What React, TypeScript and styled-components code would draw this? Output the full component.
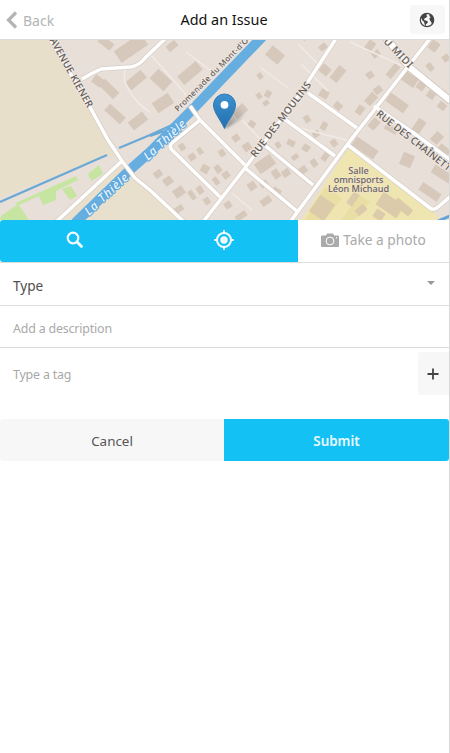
import React from "react";
import styled, { createGlobalStyle } from "styled-components";

const Global = createGlobalStyle`
  * { box-sizing: border-box; }
  body { margin: 0; background: #fff; font-family: "Noto Sans", "Open Sans", sans-serif; }
`;

const Screen = styled.main`
  width: 450px;
  height: 753px;
  border-right: 1px solid #d9d9d9;
  background: #fff;
  overflow: hidden;
`;

const Header = styled.header`
  height: 40px;
  display: grid;
  grid-template-columns: 1fr auto 1fr;
  align-items: center;
  border-bottom: 1px solid #dcdcd8;
`;

const BackButton = styled.button`
  display: flex;
  align-items: center;
  gap: 5px;
  padding: 2px 0 0 6px;
  border: 0;
  background: none;
  color: #b4b4b4;
  font: 14px/20px "Noto Sans", sans-serif;
`;

const Title = styled.h1`
  margin: 0;
  padding-right: 1px;
  color: #111;
  font: 400 14.4px/20px "Noto Sans", sans-serif;
`;

const GlobeButton = styled.button`
  justify-self: end;
  display: flex;
  align-items: center;
  justify-content: center;
  width: 35px;
  height: 29px;
  margin-right: 4px;
  padding: 0 1px 0 0;
  border: 0;
  border-radius: 3px;
  background: #f7f7f7;
  color: #444;
`;

const MapView = styled.svg`
  display: block;
  width: 449px;
  height: 180px;
`;

const Tools = styled.div`
  display: flex;
  height: 43px;
  border-bottom: 1px solid #dcdcdc;
`;

const MapActions = styled.div`
  display: flex;
  width: 298px;
  height: 42px;
  border-radius: 3px 0 0 3px;
  overflow: hidden;
  background: #13c1f5;
`;

const MapAction = styled.button`
  flex: 1;
  display: flex;
  align-items: center;
  justify-content: center;
  padding: 0 0 3px;
  border: 0;
  background: none;
  color: #f4fcff;
`;

const PhotoButton = styled.button`
  flex: 1;
  display: flex;
  align-items: center;
  justify-content: center;
  gap: 4px;
  padding: 0 0 2px;
  border: 0;
  background: none;
  color: #aaa;
  font: 13.7px/20px "Noto Sans", sans-serif;
`;

const Field = styled.div<{ $height: number; $dark?: boolean; $last?: boolean }>`
  display: flex;
  align-items: center;
  justify-content: space-between;
  height: ${(p) => p.$height}px;
  padding-left: 13px;
  border-bottom: ${(p) => (p.$last ? "0" : "1px solid #dcdcdc")};
  color: ${(p) => (p.$dark ? "#505050" : "#a9a9a9")};
  font-size: ${(p) => (p.$dark ? 13.6 : 12.4)}px;
  letter-spacing: ${(p) => (p.$dark ? 0 : -0.17)}px;
`;

const FieldText = styled.span<{ $raised?: boolean }>`
  padding-top: ${(p) => (p.$raised ? 2 : 4)}px;
  line-height: 20px;
`;

const Caret = styled.span`
  width: 0;
  height: 0;
  margin: 0 14px 2px 0;
  border: 4px solid transparent;
  border-top-color: #999;
  border-bottom: 0;
`;

const AddButton = styled.button`
  display: flex;
  align-items: center;
  justify-content: center;
  width: 31px;
  height: 43px;
  padding: 0 1px 0 0;
  border: 0;
  border-radius: 3px 0 0 3px;
  background: #f7f7f7;
`;

const Footer = styled.div`
  display: flex;
  margin-top: 20px;
`;

const FooterButton = styled.button<{ $primary?: boolean }>`
  flex: ${(p) => (p.$primary ? "1" : "0 0 224px")};
  height: 42px;
  padding: 2px 0 0;
  border: 0;
  border-radius: ${(p) => (p.$primary ? "0 3px 3px 0" : "3px 0 0 3px")};
  background: ${(p) => (p.$primary ? "#13c1f5" : "#f7f7f7")};
  color: ${(p) => (p.$primary ? "#e9faff" : "#555")};
  font: ${(p) => (p.$primary ? 600 : 400)} 13.4px/20px "Noto Sans", sans-serif;
`;

const MapLabel = styled.text`
  font-family: "Noto Sans", sans-serif;
  font-weight: 500;
  fill: #625c5a;
  stroke: #f1e9e2;
  stroke-width: 1.6px;
  stroke-linejoin: round;
  paint-order: stroke;
`;

const PlaceLabel = styled(MapLabel)`
  fill: #6b6265;
  stroke: #eee4c8;
`;

const WaterLabel = styled(MapLabel)`
  font-style: italic;
  fill: #e6f4ff;
  stroke: #5ca5db;
  stroke-width: 2px;
`;

// x, y, width, height, rotation of each building footprint
type Building = [number, number, number, number, number];

const BUILDINGS: Building[] = [
  [106, 43, 15, 8, 38], [131, 48, 32, 14, -34], [125, 55, 12, 7, -34], [98, 81, 11, 9, 36],
  [109, 89, 20, 9, 44], [136, 80, 20, 10, -40], [115, 114, 21, 9, 42], [138, 121, 18, 10, -38],
  [161, 80, 19, 13, 43], [163, 103, 19, 12, -33], [190, 73, 24, 11, -40], [172, 46, 11, 7, -40],
  [275, 55, 16, 12, 40], [260, 76, 5, 6, -38], [240, 111, 14, 9, -40], [252, 124, 7, 6, 35],
  [236, 138, 7, 7, -35], [247, 147, 8, 8, -35], [266, 103, 6, 5, -35], [259, 96, 5, 6, -35],
  [268, 94, 6, 7, 30], [182, 147, 6, 7, -35], [192, 157, 7, 7, -35], [200, 151, 5, 7, -35],
  [205, 169, 8, 8, 30], [218, 169, 6, 8, -35], [226, 175, 7, 7, -35], [216, 181, 5, 8, -35],
  [222, 153, 6, 7, -35], [158, 174, 8, 7, -35], [168, 181, 9, 8, -35], [179, 192, 11, 9, -35],
  [192, 195, 5, 10, -35], [207, 201, 6, 7, -35], [179, 209, 9, 6, -35], [200, 190, 6, 8, -35],
  [252, 186, 8, 8, -35], [265, 164, 19, 12, -35], [276, 174, 7, 9, -35], [286, 173, 8, 7, -35],
  [264, 184, 8, 6, -35], [276, 192, 9, 8, 35], [266, 201, 11, 7, -35], [228, 205, 7, 7, -35],
  [241, 216, 12, 6, -35], [291, 143, 8, 6, 25], [278, 145, 5, 6, -35], [295, 157, 7, 5, -35],
  [307, 119, 6, 7, -35], [316, 134, 7, 6, -35], [324, 126, 6, 8, 30], [334, 143, 6, 7, -35],
  [306, 148, 7, 7, 35], [314, 163, 6, 8, -35], [325, 157, 6, 8, 35], [303, 170, 8, 7, -35],
  [306, 36, 9, 6, -40], [323, 47, 8, 6, -40], [325, 70, 10, 9, 40], [338, 74, 9, 16, 38],
  [324, 94, 9, 8, 30], [338, 106, 8, 7, 40], [360, 110, 7, 9, 35], [371, 99, 12, 8, -48],
  [378, 90, 8, 7, -35], [370, 75, 7, 7, -35], [370, 46, 8, 11, 35], [376, 54, 8, 6, -35],
  [393, 71, 7, 15, 40], [409, 79, 17, 10, 35], [421, 86, 8, 8, 35], [431, 95, 8, 7, 35],
  [442, 106, 8, 7, 35], [434, 46, 9, 10, 35], [446, 58, 7, 7, -35], [430, 67, 6, 8, -40],
  [397, 103, 22, 10, 35], [374, 124, 11, 8, -48], [391, 129, 13, 6, 28], [419, 126, 9, 14, 34],
  [437, 138, 11, 9, -48], [365, 148, 26, 10, 34], [407, 160, 12, 13, 23], [443, 151, 10, 12, -50],
  [442, 174, 21, 9, 32], [430, 192, 22, 9, 34]
];

const FACILITIES: Building[] = [
  [322, 208, 18, 20, 35], [353, 199, 7, 14, 35], [390, 205, 25, 15, 34], [403, 207, 8, 20, -50],
  [379, 215, 10, 9, 34], [361, 210, 11, 7, -40]
];

const MINOR_ROADS = [
  "M330 24L344 37M126 67Q121 78 130 92T150 112M150 54L183 91L192 103",
  "M186 52L210 70M260 67L288 88M232 193L252 210M242 120L263 142",
  "M298 44L318 64M301 64L328 91M350 42L407 68M292 126L350 141"
].join("");

const ROADS = [
  "M48 35L91 109L108 140L122 161L135 178L151 191L184 222",
  "M122 161L56 222",
  "M82 79Q92 73 101 69L130 67Q139 66 146 57L168 36",
  "M190 106L200 120L245 165M200 120L172 143Q168 147 173 151L220 197",
  "M203 222L245 168L302 91L337 37",
  "M245 168L298 212M262 143L313 185M283 118L335 156M308 93L357 128",
  "M290 222L350 141L407 68L432 36",
  "M374 106L412 132L452 161M348 145L430 208Q434 211 438 207L452 195"
].join("");

function Footprints({ items, fill }: { items: Building[]; fill: string }) {
  return (
    <g fill={fill}>
      {items.map(([x, y, w, h, r], i) => (
        <rect key={i} x={x - w / 2} y={y - h / 2} width={w} height={h} transform={`rotate(${r} ${x} ${y})`} />
      ))}
    </g>
  );
}

function StreetMap() {
  return (
    <MapView viewBox="0 40 449 180" role="img" aria-label="Map">
      <defs>
        <linearGradient id="pin" x1="0" y1="0" x2="0" y2="1">
          <stop offset="0" stopColor="#3e91d0" />
          <stop offset="1" stopColor="#2370ad" />
        </linearGradient>
        <linearGradient id="shade" x1="0" y1="1" x2="1" y2="0">
          <stop offset="0" stopColor="#555" stopOpacity=".65" />
          <stop offset="1" stopColor="#777" stopOpacity="0" />
        </linearGradient>
        <filter id="soft"><feGaussianBlur stdDeviation="1" /></filter>
      </defs>
      <rect y="40" width="449" height="180" fill="#e8dfd8" />
      <path d="M0 40H51L91 109L122 161L107 155L0 198Z" fill="#e7dfc9" />
      <path d="M122 161L60 220H184L150 190Z" fill="#e8dfcd" />
      <path d="M349 147L433 210L442 222H300Z" fill="#eee5b0" />
      <path d="M305 220L325 187L342 198L323 222M340 222L359 195L370 202L352 222" fill="#e9deA3" />
      <path d="M1 216L18 204L29 220H0ZM88 174L99 165L103 174L91 181ZM16 203L76 176L78 180L56 191V200L43 205L39 196L17 206ZM62 189L71 186L77 196L70 200Z" fill="#c6e5a0" />
      <path d="M0 202L107 155M119 148L150 135L172 125M150 136L171 129" stroke="#6aa8d6" strokeWidth="2.1" fill="none" />
      <path d="M265 34L192 110L150 152L132 168L75 223" stroke="#67aee0" strokeWidth="10" fill="none" />
      <path d="M436 222L452 215" stroke="#62a5d8" strokeWidth="3" />
      <Footprints items={BUILDINGS} fill="#d6c8bb" />
      <Footprints items={FACILITIES} fill="#dccbaa" />
      <path d={MINOR_ROADS} fill="none" stroke="#f1eae5" strokeWidth="1.5" />
      <g fill="none" strokeLinejoin="round">
        <path d={ROADS} stroke="#d8cec7" strokeWidth="5" />
        <path d="M384 35L409 67L452 102" stroke="#cbc2bc" strokeWidth="8" />
        <path d={ROADS} stroke="#fff" strokeWidth="3.5" />
        <path d="M384 35L409 67L452 102" stroke="#fff" strokeWidth="6.3" />
      </g>
      <MapLabel fontSize="10" textLength="78" transform="translate(49.500 40) rotate(61)">AVENUE KIENER</MapLabel>
      <MapLabel fontSize="8" textLength="104" fontWeight="400" transform="translate(178 112) rotate(-45)">Promenade du Mont-d'Or</MapLabel>
      <MapLabel fontSize="10" textLength="92" transform="translate(255.500 158) rotate(-52.500)">RUE DES MOULINS</MapLabel>
      <MapLabel fontSize="10" textLength="37" transform="translate(383 42) rotate(46)">U MIDI</MapLabel>
      <MapLabel fontSize="10" textLength="103" transform="translate(375.500 115) rotate(38)">RUE DES CHAÎNETTES</MapLabel>
      <WaterLabel fontSize="12" textLength="55" transform="translate(89 216) rotate(-43)">La Thièle</WaterLabel>
      <WaterLabel fontSize="12" textLength="53" transform="translate(148 161) rotate(-43)">La Thièle</WaterLabel>
      <g textAnchor="middle" fontSize="9.100">
        <PlaceLabel x="358.500" y="174">Salle</PlaceLabel>
        <PlaceLabel x="358.500" y="183">omnisports</PlaceLabel>
        <PlaceLabel x="358.500" y="191.500">Léon Michaud</PlaceLabel>
      </g>
      <path d="M225 129L232 113Q239 104 243 110Q246 115 240 120Z" fill="url(#shade)" filter="url(#soft)" />
      <path d="M224.500 128.500C220 119 213.500 112 213.500 105a11 11 0 0 1 22 0C235.500 112 229 119 224.500 128.500Z" fill="url(#pin)" stroke="#2e7cb7" />
      <circle cx="224.500" cy="104.800" r="3.900" fill="#fff" />
    </MapView>
  );
}

function GlobeIcon() {
  return (
    <svg width="16" height="16" viewBox="0 0 16 16">
      <circle cx="8" cy="8" r="6.700" fill="none" stroke="currentColor" strokeWidth="1.200" />
      <path fill="currentColor" d="M1.500 6L3.500 3L6 1.400L8 2L7.300 3.500L8.500 4L7 5.800L5.700 6.200L5 8L6.500 8.500L8.800 9.300L8.500 11L7 12.200L6.500 14.500L5.600 12L5 9.800L3.300 8.500L2.600 6.500ZM10.500 2L13 3.500L14.600 6.500L14.500 10L13 12.500L12.200 10L11 8.500L10.300 6.300L11.700 5.200L10.300 4Z" />
    </svg>
  );
}

function SearchIcon() {
  return (
    <svg width="18" height="18" viewBox="0 0 18 18" fill="none" stroke="currentColor">
      <circle cx="7" cy="7" r="5.300" strokeWidth="2.200" />
      <path d="M10.800 10.800L16.300 16.300" strokeWidth="2.800" />
    </svg>
  );
}

function LocateIcon() {
  return (
    <svg width="20" height="20" viewBox="0 0 20 20" fill="none" stroke="currentColor" strokeWidth="2">
      <circle cx="10" cy="10" r="7" />
      <path d="M10 .3V3M10 17V19.700M.3 10H3M17 10H19.700" />
      <circle cx="10" cy="10" r="3.700" fill="currentColor" stroke="none" />
    </svg>
  );
}

function CameraIcon() {
  return (
    <svg width="18" height="15" viewBox="0 0 18 15">
      <path fill="currentColor" d="M1 2.500H5L6 .5H12L13 2.500H17Q18 2.500 18 3.500V13Q18 14 17 14H1Q0 14 0 13V3.500Q0 2.500 1 2.500Z" />
      <circle cx="9" cy="8" r="3.900" fill="none" stroke="#fff" />
      <circle cx="15.500" cy="4.800" r=".7" fill="#fff" />
    </svg>
  );
}

export default function App() {
  return (
    <>
      <Global />
      <Screen>
        <Header>
          <BackButton>
            <svg width="12" height="20" viewBox="0 0 12 20" fill="none" stroke="currentColor" strokeWidth="3.200">
              <path d="M10 1.500L2.500 9L10 16.500" />
            </svg>
            Back
          </BackButton>
          <Title>Add an Issue</Title>
          <GlobeButton aria-label="Language"><GlobeIcon /></GlobeButton>
        </Header>
        <StreetMap />
        <Tools>
          <MapActions>
            <MapAction aria-label="Search"><SearchIcon /></MapAction>
            <MapAction aria-label="Locate"><LocateIcon /></MapAction>
          </MapActions>
          <PhotoButton>
            <CameraIcon />
            Take a photo
          </PhotoButton>
        </Tools>
        <Field $height={43} $dark><FieldText>Type</FieldText><Caret /></Field>
        <Field $height={42}><FieldText>Add a description</FieldText></Field>
        <Field $height={51} $last>
          <FieldText $raised>Type a tag</FieldText>
          <AddButton aria-label="Add tag">
            <svg width="12" height="12" viewBox="0 0 12 12">
              <path d="M6 .5V11.500M.5 6H11.500" stroke="#444" strokeWidth="1.800" />
            </svg>
          </AddButton>
        </Field>
        <Footer>
          <FooterButton>Cancel</FooterButton>
          <FooterButton $primary>Submit</FooterButton>
        </Footer>
      </Screen>
    </>
  );
}
